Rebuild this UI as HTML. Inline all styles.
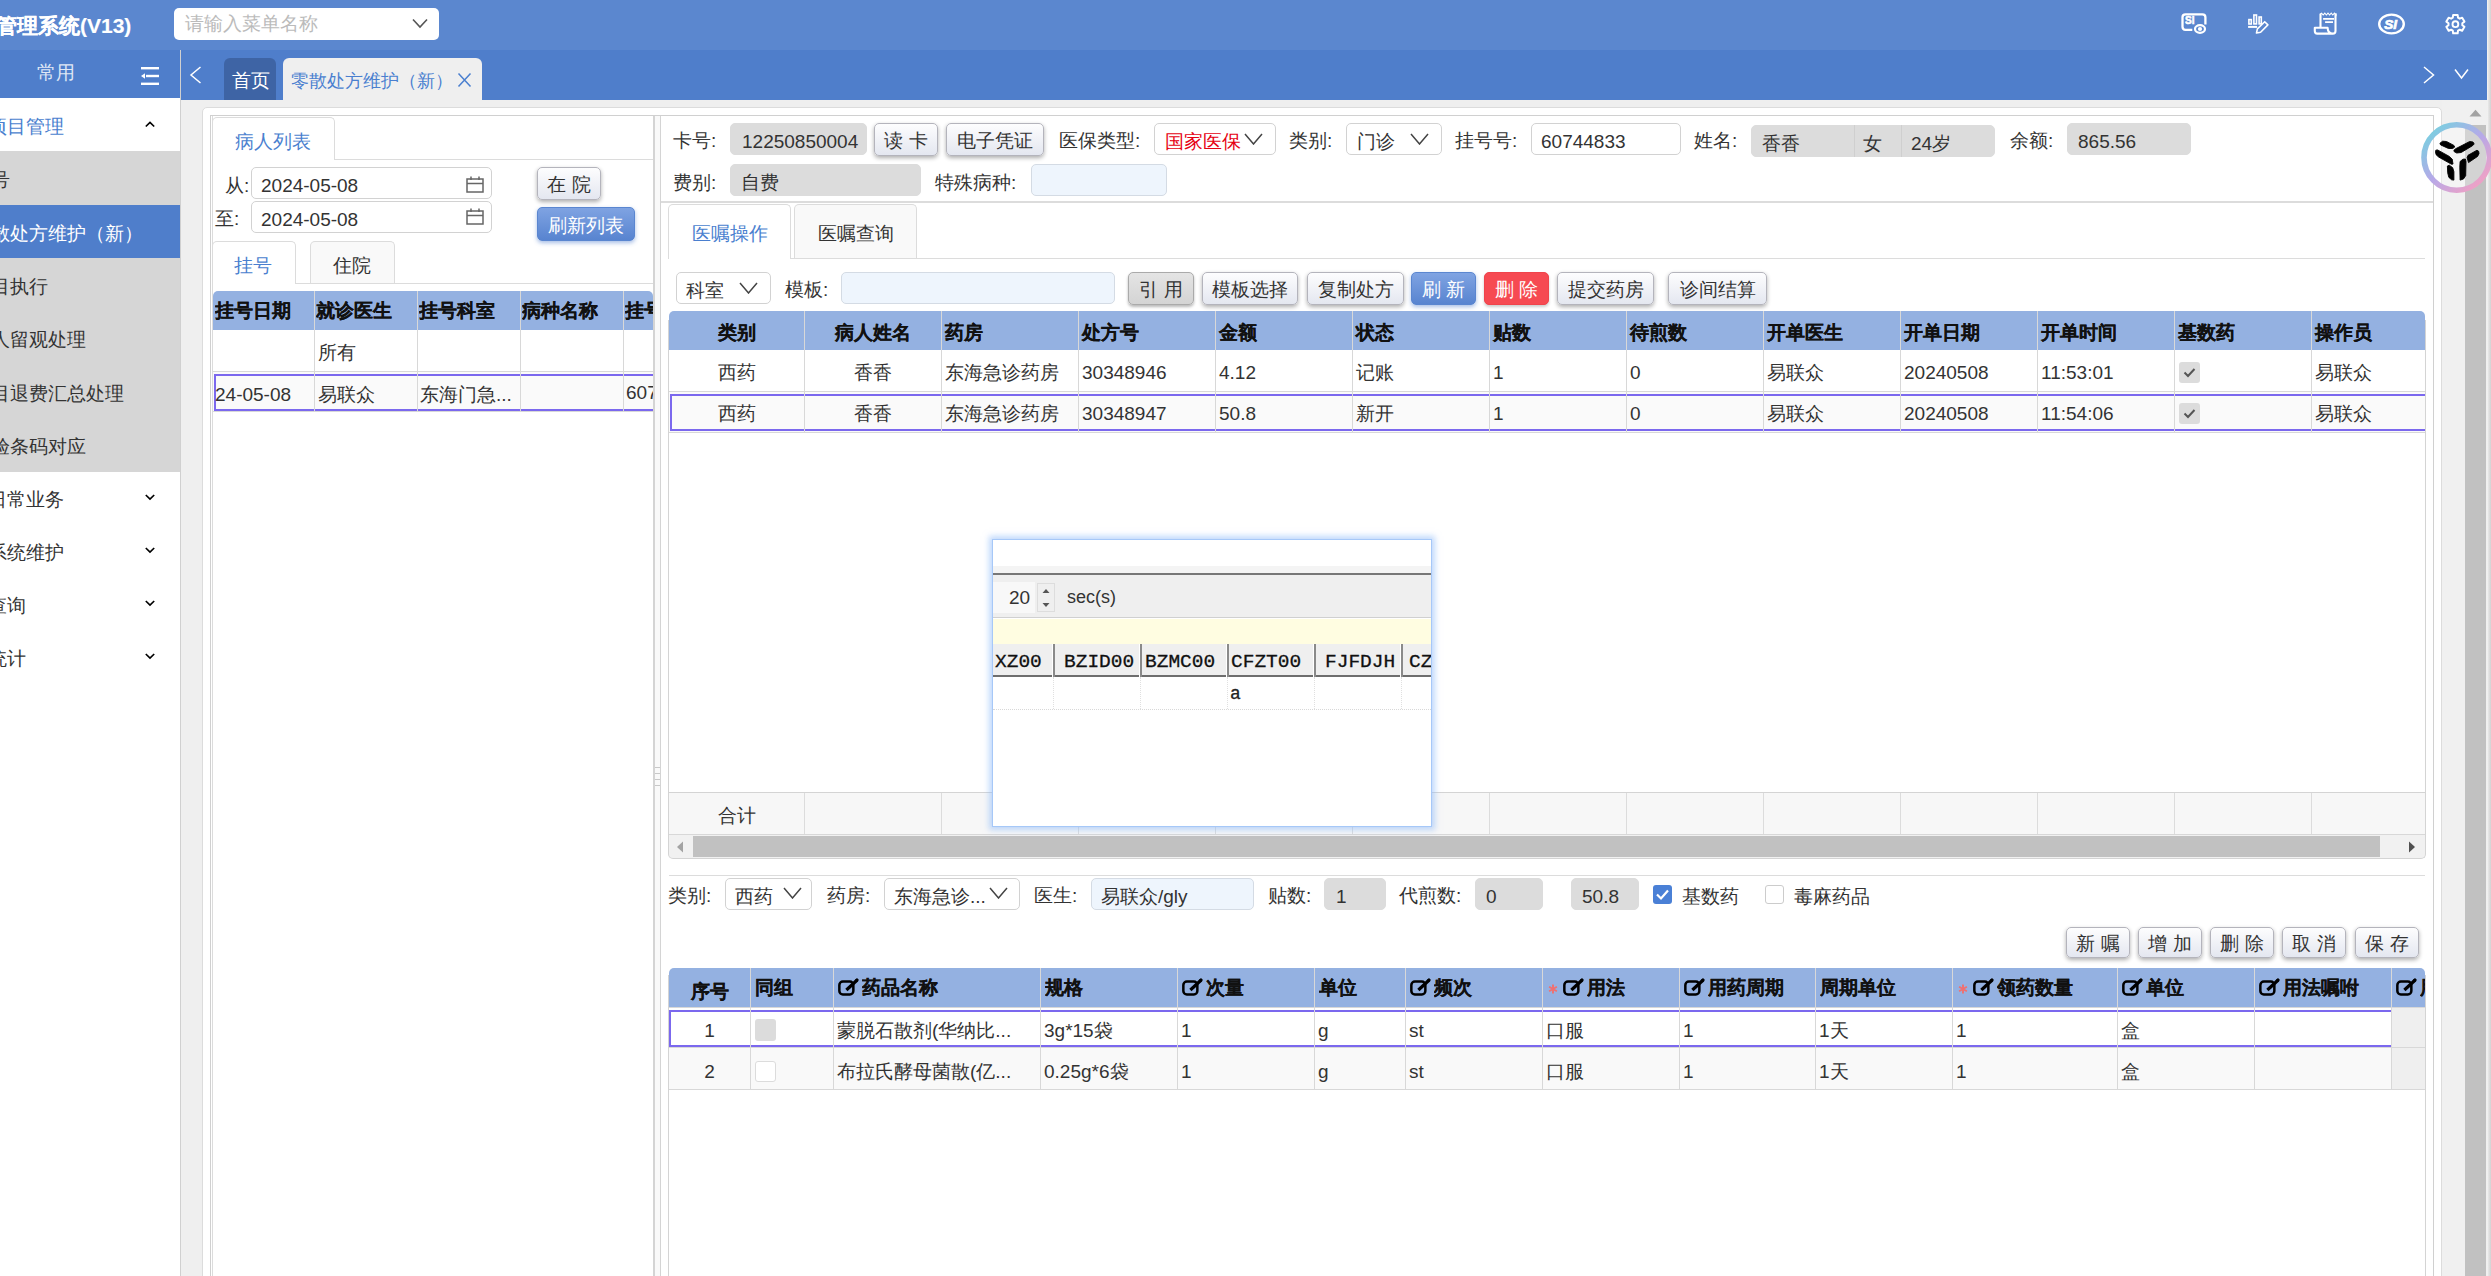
<!DOCTYPE html>
<html><head><meta charset="utf-8">
<style>
*{box-sizing:border-box;margin:0;padding:0}
html,body{width:2491px;height:1276px;overflow:hidden;background:#efefef;font-family:"Liberation Sans",sans-serif;font-size:19px;color:#333}
.a{position:absolute}
.nw{white-space:nowrap}
.b{font-weight:bold}
[style*="font-weight:bold"]{-webkit-text-stroke:0.15px currentColor}
.hdr{left:0;top:0;width:2487px;height:50px;background:#5b87cf}
.tabbar{left:0;top:50px;width:2487px;height:50px;background:#4f7ecb}
.rborder{left:2487px;top:0;width:4px;height:1276px;background:linear-gradient(90deg,#f6f6f6,#e4e4e4 40%,#d2d2d2)}
.side{left:0;top:98px;width:180px;height:1178px;background:#fff}
.si{left:0;width:180px;height:54px;background:#d6d6d6;line-height:53px;white-space:nowrap;overflow:hidden}
.si span{position:absolute;left:-28px;top:2px}
.sg{left:0;width:180px;height:53px;line-height:53px;white-space:nowrap;overflow:hidden}
.sg span{position:absolute;left:-12px;top:2px}
.chev{position:absolute;left:145px;width:10px;height:10px}
</style></head><body>
<!-- header -->
<div class="a hdr"></div>
<div class="a tabbar"></div>
<div class="a rborder"></div>
<div class="a nw" style="left:-4px;top:8px;height:34px;line-height:35px;font-size:21px;font-weight:bold;color:#fff">管理系统(V13)</div>
<div class="a" style="left:174px;top:8px;width:265px;height:32px;background:#fff;border-radius:5px"></div>
<div class="a nw" style="left:185px;top:8px;height:32px;line-height:32px;color:#bbb">请输入菜单名称</div>
<svg class="a" style="left:412px;top:18px" width="16" height="11" viewBox="0 0 16 11"><path d="M1 1.5 L8 9 L15 1.5" fill="none" stroke="#555" stroke-width="1.6"/></svg>

<!-- sidebar -->
<div class="a side"></div>
<div class="a" style="left:0;top:50px;width:180px;height:48px;background:#4f7ecb"></div>
<div class="a nw" style="left:37px;top:50px;height:48px;line-height:46px;color:#dfe7f5">常用</div>
<svg class="a" style="left:140px;top:66px" width="20" height="20" viewBox="0 0 20 20"><g fill="#fff"><rect x="1" y="1" width="18" height="2.4"/><rect x="6" y="8.8" width="13" height="2.4"/><rect x="1" y="16.6" width="18" height="2.4"/><path d="M1 10 L5 7.3 L5 12.7 Z"/></g></svg>
<div class="a" style="left:180px;top:50px;width:1px;height:1226px;background:#d0d0d0"></div>

<div class="a sg" style="top:98px;color:#4a7fcf"><span>项目管理</span><svg class="chev" style="top:22px" viewBox="0 0 10 10"><path d="M0.8 6.5 L5 2.5 L9.2 6.5" fill="none" stroke="#000" stroke-width="1.7"/></svg></div>
<div class="a si" style="top:151px"><span>挂号</span></div>
<div class="a si" style="top:205px;height:53px;background:#4f7ecb;color:#fff"><span>零散处方维护（新）</span></div>
<div class="a si" style="top:258px"><span>项目执行</span></div>
<div class="a si" style="top:311px"><span>病人留观处理</span></div>
<div class="a si" style="top:365px"><span>项目退费汇总处理</span></div>
<div class="a si" style="top:418px;height:53.5px"><span>检验条码对应</span></div>
<div class="a sg" style="top:471px"><span>日常业务</span><svg class="chev" style="top:21px" viewBox="0 0 10 10"><path d="M0.8 3 L5 7 L9.2 3" fill="none" stroke="#000" stroke-width="1.7"/></svg></div>
<div class="a sg" style="top:524px"><span>系统维护</span><svg class="chev" style="top:21px" viewBox="0 0 10 10"><path d="M0.8 3 L5 7 L9.2 3" fill="none" stroke="#000" stroke-width="1.7"/></svg></div>
<div class="a sg" style="top:577px"><span>查询</span><svg class="chev" style="top:21px" viewBox="0 0 10 10"><path d="M0.8 3 L5 7 L9.2 3" fill="none" stroke="#000" stroke-width="1.7"/></svg></div>
<div class="a sg" style="top:630px"><span>统计</span><svg class="chev" style="top:21px" viewBox="0 0 10 10"><path d="M0.8 3 L5 7 L9.2 3" fill="none" stroke="#000" stroke-width="1.7"/></svg></div>

<!-- tabs -->
<svg class="a" style="left:189px;top:66px" width="13" height="18" viewBox="0 0 13 18"><path d="M11.5 1 L2 9 L11.5 17" fill="none" stroke="#fff" stroke-width="1.5"/></svg>
<div class="a" style="left:224px;top:58px;width:52px;height:42px;background:#3e64a5;border-radius:6px 6px 0 0"></div>
<div class="a nw" style="left:232px;top:62px;height:38px;line-height:38px;color:#fff">首页</div>
<div class="a" style="left:283px;top:58px;width:199px;height:42px;background:#efefef;border-radius:6px 6px 0 0"></div>
<div class="a nw" style="left:291px;top:62px;height:38px;line-height:38px;color:#4a7fcf;font-size:18px">零散处方维护（新）</div>
<svg class="a" style="left:457px;top:72px" width="15" height="16" viewBox="0 0 15 16"><path d="M1.5 1.5 L13.5 14.5 M13.5 1.5 L1.5 14.5" fill="none" stroke="#4a7fcf" stroke-width="1.5"/></svg>
<svg class="a" style="left:2422px;top:66px" width="14" height="18" viewBox="0 0 14 18"><path d="M2 1 L11.5 9 L2 17" fill="none" stroke="#fff" stroke-width="1.5"/></svg>
<svg class="a" style="left:2454px;top:68px" width="15" height="12" viewBox="0 0 15 12"><path d="M1 1.5 L7.5 10 L14 1.5" fill="none" stroke="#fff" stroke-width="1.5"/></svg>


<div class="a" style="left:202px;top:107px;width:2240px;height:1200px;background:#fff;border:1px solid #dcdcdc;border-radius:5px"></div>
<div class="a" style="left:210px;top:115px;width:2224px;height:1200px;border:1px solid #d0d0d0"></div>
<div class="a" style="left:212px;top:116px;width:1px;height:1160px;background:#dcdcdc"></div>
<div class="a" style="left:653px;top:116px;width:2px;height:1160px;background:#d4d4d4"></div>
<div class="a" style="left:655px;top:116px;width:5px;height:1160px;background:#f9f9f9"></div>
<div class="a" style="left:660px;top:116px;width:1px;height:1160px;background:#d4d4d4"></div>
<div class="a" style="left:655px;top:767px;width:5px;height:1px;background:#c8c8c8"></div>
<div class="a" style="left:655px;top:773px;width:5px;height:1px;background:#c8c8c8"></div>
<div class="a" style="left:655px;top:779px;width:5px;height:1px;background:#c8c8c8"></div>
<div class="a" style="left:655px;top:785px;width:5px;height:1px;background:#c8c8c8"></div>
<div class="a" style="left:212px;top:117px;width:123px;height:43px;background:#fff;border:1px solid #dcdcdc;border-bottom:none;border-radius:5px 5px 0 0"></div>
<div class="a" style="left:335px;top:159px;width:318px;height:1px;background:#dcdcdc"></div>
<div class="a nw" style="left:235px;top:122px;height:40px;line-height:40px;color:#4a7fcf">病人列表</div>
<div class="a nw" style="left:225px;top:170px;height:32px;line-height:32px;color:#333">从:</div>
<div class="a nw" style="left:215px;top:203px;height:32px;line-height:32px;color:#333">至:</div>
<div class="a" style="left:251px;top:167px;width:241px;height:32px;border-radius:5px;background:#fff;border:1px solid #d2d2d2;"></div>
<div class="a" style="left:251px;top:201px;width:241px;height:32px;border-radius:5px;background:#fff;border:1px solid #d2d2d2;"></div>
<div class="a nw" style="left:261px;top:169px;height:33px;line-height:33px;color:#333">2024-05-08</div>
<div class="a nw" style="left:261px;top:203px;height:33px;line-height:33px;color:#333">2024-05-08</div>
<svg class="a" style="left:466px;top:176px" width="18" height="17" viewBox="0 0 18 17"><g fill="none" stroke="#666" stroke-width="1.5"><rect x="1" y="3" width="16" height="13"/><path d="M1 7.5 H17 M5 0.5 V4 M13 0.5 V4"/></g></svg>
<svg class="a" style="left:466px;top:208px" width="18" height="17" viewBox="0 0 18 17"><g fill="none" stroke="#666" stroke-width="1.5"><rect x="1" y="3" width="16" height="13"/><path d="M1 7.5 H17 M5 0.5 V4 M13 0.5 V4"/></g></svg>
<div class="a nw" style="left:537px;top:167px;width:64px;height:33px;line-height:34px;text-align:center;border-radius:5px;background:linear-gradient(#fdfdfe,#e4e7f0);border:1px solid #b4b4bc;box-shadow:0 2px 4px rgba(0,0,0,.32);color:#333;">在&nbsp;院</div>
<div class="a nw" style="left:537px;top:207px;width:98px;height:34px;line-height:35px;text-align:center;border-radius:5px;background:linear-gradient(#7fa3e2,#5884d0);border:1px solid #5a86d0;box-shadow:0 2px 4px rgba(60,110,200,.45);color:#fff;">刷新列表</div>
<div class="a" style="left:212px;top:241px;width:84px;height:43px;background:#fff;border:1px solid #dcdcdc;border-bottom:none;border-radius:5px 5px 0 0"></div>
<div class="a" style="left:310px;top:241px;width:85px;height:42px;background:#f9f9f9;border:1px solid #dcdcdc;border-bottom:none;border-radius:5px 5px 0 0"></div>
<div class="a" style="left:296px;top:283px;width:357px;height:1px;background:#dcdcdc"></div>
<div class="a" style="left:310px;top:283px;width:85px;height:1px;background:#dcdcdc"></div>
<div class="a nw" style="left:234px;top:247px;height:38px;line-height:38px;color:#4a7fcf">挂号</div>
<div class="a nw" style="left:333px;top:247px;height:38px;line-height:38px;color:#333">住院</div>
<div class="a" style="left:213px;top:291px;width:440px;height:39px;background:#94b1e1;border-radius:5px 5px 0 0"></div>
<div class="a" style="left:314px;top:291px;width:1px;height:121px;background:#d8d8d8"></div>
<div class="a" style="left:417px;top:291px;width:1px;height:121px;background:#d8d8d8"></div>
<div class="a" style="left:520px;top:291px;width:1px;height:121px;background:#d8d8d8"></div>
<div class="a" style="left:623px;top:291px;width:1px;height:121px;background:#d8d8d8"></div>
<div class="a nw" style="left:215px;top:291px;width:99px;height:39px;line-height:40px;overflow:hidden;font-weight:bold;color:#111">挂号日期</div>
<div class="a nw" style="left:316px;top:291px;width:101px;height:39px;line-height:40px;overflow:hidden;font-weight:bold;color:#111">就诊医生</div>
<div class="a nw" style="left:419px;top:291px;width:101px;height:39px;line-height:40px;overflow:hidden;font-weight:bold;color:#111">挂号科室</div>
<div class="a nw" style="left:522px;top:291px;width:101px;height:39px;line-height:40px;overflow:hidden;font-weight:bold;color:#111">病种名称</div>
<div class="a nw" style="left:625px;top:291px;width:28px;height:39px;line-height:40px;overflow:hidden;font-weight:bold;color:#111">挂号号</div>
<div class="a" style="left:213px;top:371px;width:440px;height:1px;background:#d8d8d8"></div>
<div class="a" style="left:213px;top:372px;width:440px;height:40px;background:#fafafa"></div>
<div class="a" style="left:214px;top:374px;width:439px;height:37px;border:2px solid #7b68ee;border-right:none"></div>
<div class="a" style="left:314px;top:372px;width:1px;height:40px;background:#d8d8d8"></div>
<div class="a" style="left:417px;top:372px;width:1px;height:40px;background:#d8d8d8"></div>
<div class="a" style="left:520px;top:372px;width:1px;height:40px;background:#d8d8d8"></div>
<div class="a" style="left:623px;top:372px;width:1px;height:40px;background:#d8d8d8"></div>
<div class="a" style="left:213px;top:411px;width:440px;height:1px;background:#d8d8d8"></div>
<div class="a nw" style="left:318px;top:333px;height:40px;line-height:40px;color:#333">所有</div>
<div class="a nw" style="left:215px;top:375px;height:39px;line-height:39px;color:#333">24-05-08</div>
<div class="a nw" style="left:318px;top:375px;height:39px;line-height:39px;color:#333">易联众</div>
<div class="a nw" style="left:420px;top:375px;height:39px;line-height:39px;color:#333">东海门急...</div>
<div class="a nw" style="left:626px;top:373px;width:27px;height:39px;line-height:39px;overflow:hidden;color:#333">60744833</div>
<div class="a nw" style="left:673px;top:125px;height:32px;line-height:32px;color:#333">卡号:</div>
<div class="a" style="left:730px;top:123px;width:137px;height:32px;border-radius:5px;background:#dcdcdc;border:1px solid #dcdcdc;"></div>
<div class="a nw" style="left:742px;top:125px;height:33px;line-height:33px;color:#333">12250850004</div>
<div class="a nw" style="left:874px;top:123px;width:64px;height:33px;line-height:34px;text-align:center;border-radius:5px;background:linear-gradient(#fdfdfe,#e4e7f0);border:1px solid #b4b4bc;box-shadow:0 2px 4px rgba(0,0,0,.32);color:#333;">读&nbsp;卡</div>
<div class="a nw" style="left:946px;top:123px;width:98px;height:33px;line-height:34px;text-align:center;border-radius:5px;background:linear-gradient(#fdfdfe,#e4e7f0);border:1px solid #b4b4bc;box-shadow:0 2px 4px rgba(0,0,0,.32);color:#333;">电子凭证</div>
<div class="a nw" style="left:1059px;top:125px;height:32px;line-height:32px;color:#333">医保类型:</div>
<div class="a" style="left:1154px;top:123px;width:122px;height:32px;border-radius:5px;background:#fff;border:1px solid #d2d2d2;"></div>
<div class="a nw" style="left:1165px;top:125px;height:33px;line-height:33px;color:#e60012">国家医保</div>
<svg class="a" style="left:1244px;top:133px" width="19" height="12" viewBox="0 0 19 12"><path d="M1 1 L9.5 11 L18 1" fill="none" stroke="#444" stroke-width="1.5"/></svg>
<div class="a nw" style="left:1289px;top:125px;height:32px;line-height:32px;color:#333">类别:</div>
<div class="a" style="left:1346px;top:123px;width:96px;height:32px;border-radius:5px;background:#fff;border:1px solid #d2d2d2;"></div>
<div class="a nw" style="left:1357px;top:125px;height:33px;line-height:33px;color:#333">门诊</div>
<svg class="a" style="left:1410px;top:133px" width="19" height="12" viewBox="0 0 19 12"><path d="M1 1 L9.5 11 L18 1" fill="none" stroke="#444" stroke-width="1.5"/></svg>
<div class="a nw" style="left:1455px;top:125px;height:32px;line-height:32px;color:#333">挂号号:</div>
<div class="a" style="left:1531px;top:123px;width:150px;height:32px;border-radius:5px;background:#fff;border:1px solid #d2d2d2;"></div>
<div class="a nw" style="left:1541px;top:125px;height:33px;line-height:33px;color:#333">60744833</div>
<div class="a nw" style="left:1694px;top:125px;height:32px;line-height:32px;color:#333">姓名:</div>
<div class="a" style="left:1751px;top:125px;width:244px;height:32px;border-radius:5px;background:#dcdcdc;border:1px solid #dcdcdc;"></div>
<div class="a" style="left:1854px;top:125px;width:1px;height:32px;background:#cfcfcf"></div>
<div class="a" style="left:1901px;top:125px;width:1px;height:32px;background:#cfcfcf"></div>
<div class="a nw" style="left:1762px;top:127px;height:33px;line-height:33px;color:#333">香香</div>
<div class="a nw" style="left:1863px;top:127px;height:33px;line-height:33px;color:#333">女</div>
<div class="a nw" style="left:1911px;top:127px;height:33px;line-height:33px;color:#333">24岁</div>
<div class="a nw" style="left:2010px;top:125px;height:32px;line-height:32px;color:#333">余额:</div>
<div class="a" style="left:2067px;top:123px;width:124px;height:32px;border-radius:5px;background:#dcdcdc;border:1px solid #dcdcdc;"></div>
<div class="a nw" style="left:2078px;top:125px;height:33px;line-height:33px;color:#333">865.56</div>
<div class="a nw" style="left:673px;top:166px;height:33px;line-height:33px;color:#333">费别:</div>
<div class="a" style="left:730px;top:164px;width:191px;height:32px;border-radius:5px;background:#dcdcdc;border:1px solid #dcdcdc;"></div>
<div class="a nw" style="left:741px;top:166px;height:34px;line-height:34px;color:#333">自费</div>
<div class="a nw" style="left:935px;top:166px;height:33px;line-height:33px;color:#333">特殊病种:</div>
<div class="a" style="left:1031px;top:164px;width:136px;height:32px;border-radius:5px;background:#eef5fd;border:1px solid #d4dbe4;"></div>
<div class="a" style="left:661px;top:201px;width:1772px;height:2px;background:#dcdcdc"></div>
<div class="a" style="left:668px;top:204px;width:123px;height:55px;background:#fff;border:1px solid #dcdcdc;border-bottom:none;border-radius:5px 5px 0 0"></div>
<div class="a" style="left:794px;top:204px;width:123px;height:55px;background:#f9f9f9;border:1px solid #dcdcdc;border-bottom:none;border-radius:5px 5px 0 0"></div>
<div class="a" style="left:791px;top:258px;width:1634px;height:1px;background:#dcdcdc"></div>
<div class="a nw" style="left:692px;top:214px;height:40px;line-height:40px;color:#4a7fcf">医嘱操作</div>
<div class="a nw" style="left:818px;top:214px;height:40px;line-height:40px;color:#333">医嘱查询</div>
<div class="a" style="left:676px;top:272px;width:95px;height:32px;border-radius:5px;background:#fff;border:1px solid #d2d2d2;"></div>
<div class="a nw" style="left:686px;top:274px;height:33px;line-height:33px;color:#333">科室</div>
<svg class="a" style="left:739px;top:282px" width="19" height="12" viewBox="0 0 19 12"><path d="M1 1 L9.5 11 L18 1" fill="none" stroke="#444" stroke-width="1.5"/></svg>
<div class="a nw" style="left:785px;top:274px;height:32px;line-height:32px;color:#333">模板:</div>
<div class="a" style="left:841px;top:272px;width:274px;height:32px;border-radius:5px;background:#eef5fd;border:1px solid #d4dbe4;"></div>
<div class="a nw" style="left:1128px;top:272px;width:66px;height:33px;line-height:34px;text-align:center;border-radius:5px;background:linear-gradient(#e4e4e4,#d4d4d4);border:1px solid #aaa;box-shadow:0 2px 3px rgba(0,0,0,.28);color:#333;">引&nbsp;用</div>
<div class="a nw" style="left:1202px;top:272px;width:96px;height:33px;line-height:34px;text-align:center;border-radius:5px;background:linear-gradient(#fdfdfe,#e4e7f0);border:1px solid #b4b4bc;box-shadow:0 2px 4px rgba(0,0,0,.32);color:#333;">模板选择</div>
<div class="a nw" style="left:1307px;top:272px;width:97px;height:33px;line-height:34px;text-align:center;border-radius:5px;background:linear-gradient(#fdfdfe,#e4e7f0);border:1px solid #b4b4bc;box-shadow:0 2px 4px rgba(0,0,0,.32);color:#333;">复制处方</div>
<div class="a nw" style="left:1411px;top:272px;width:65px;height:33px;line-height:34px;text-align:center;border-radius:5px;background:linear-gradient(#7fa3e2,#5884d0);border:1px solid #5a86d0;box-shadow:0 2px 4px rgba(60,110,200,.45);color:#fff;">刷&nbsp;新</div>
<div class="a nw" style="left:1484px;top:272px;width:65px;height:33px;line-height:34px;text-align:center;border-radius:5px;background:#f64a52;border:1px solid #f0444c;box-shadow:0 2px 3px rgba(0,0,0,.2);color:#fff;">删&nbsp;除</div>
<div class="a nw" style="left:1557px;top:272px;width:97px;height:33px;line-height:34px;text-align:center;border-radius:5px;background:linear-gradient(#fdfdfe,#e4e7f0);border:1px solid #b4b4bc;box-shadow:0 2px 4px rgba(0,0,0,.32);color:#333;">提交药房</div>
<div class="a nw" style="left:1668px;top:272px;width:99px;height:33px;line-height:34px;text-align:center;border-radius:5px;background:linear-gradient(#fdfdfe,#e4e7f0);border:1px solid #b4b4bc;box-shadow:0 2px 4px rgba(0,0,0,.32);color:#333;">诊间结算</div>
<div class="a" style="left:669px;top:311px;width:1756px;height:39px;background:#94b1e1;border-radius:5px 5px 0 0"></div>
<div class="a" style="left:668px;top:320px;width:1px;height:530px;background:#d4d4d4"></div>
<div class="a" style="left:2425px;top:320px;width:1px;height:530px;background:#d4d4d4"></div>
<div class="a" style="left:804px;top:311px;width:1px;height:121px;background:#d8d8d8"></div>
<div class="a" style="left:941px;top:311px;width:1px;height:121px;background:#d8d8d8"></div>
<div class="a" style="left:1078px;top:311px;width:1px;height:121px;background:#d8d8d8"></div>
<div class="a" style="left:1215px;top:311px;width:1px;height:121px;background:#d8d8d8"></div>
<div class="a" style="left:1352px;top:311px;width:1px;height:121px;background:#d8d8d8"></div>
<div class="a" style="left:1489px;top:311px;width:1px;height:121px;background:#d8d8d8"></div>
<div class="a" style="left:1626px;top:311px;width:1px;height:121px;background:#d8d8d8"></div>
<div class="a" style="left:1763px;top:311px;width:1px;height:121px;background:#d8d8d8"></div>
<div class="a" style="left:1900px;top:311px;width:1px;height:121px;background:#d8d8d8"></div>
<div class="a" style="left:2037px;top:311px;width:1px;height:121px;background:#d8d8d8"></div>
<div class="a" style="left:2174px;top:311px;width:1px;height:121px;background:#d8d8d8"></div>
<div class="a" style="left:2311px;top:311px;width:1px;height:121px;background:#d8d8d8"></div>
<div class="a nw" style="left:669px;top:313px;width:135px;height:40px;line-height:40px;text-align:center;font-weight:bold;color:#111">类别</div>
<div class="a nw" style="left:804px;top:313px;width:137px;height:40px;line-height:40px;text-align:center;font-weight:bold;color:#111">病人姓名</div>
<div class="a nw" style="left:945px;top:313px;height:40px;line-height:40px;font-weight:bold;color:#111">药房</div>
<div class="a nw" style="left:1082px;top:313px;height:40px;line-height:40px;font-weight:bold;color:#111">处方号</div>
<div class="a nw" style="left:1219px;top:313px;height:40px;line-height:40px;font-weight:bold;color:#111">金额</div>
<div class="a nw" style="left:1356px;top:313px;height:40px;line-height:40px;font-weight:bold;color:#111">状态</div>
<div class="a nw" style="left:1493px;top:313px;height:40px;line-height:40px;font-weight:bold;color:#111">贴数</div>
<div class="a nw" style="left:1630px;top:313px;height:40px;line-height:40px;font-weight:bold;color:#111">待煎数</div>
<div class="a nw" style="left:1767px;top:313px;height:40px;line-height:40px;font-weight:bold;color:#111">开单医生</div>
<div class="a nw" style="left:1904px;top:313px;height:40px;line-height:40px;font-weight:bold;color:#111">开单日期</div>
<div class="a nw" style="left:2041px;top:313px;height:40px;line-height:40px;font-weight:bold;color:#111">开单时间</div>
<div class="a nw" style="left:2178px;top:313px;height:40px;line-height:40px;font-weight:bold;color:#111">基数药</div>
<div class="a nw" style="left:2315px;top:313px;height:40px;line-height:40px;font-weight:bold;color:#111">操作员</div>
<div class="a" style="left:669px;top:391px;width:1756px;height:1px;background:#d8d8d8"></div>
<div class="a" style="left:669px;top:392px;width:1756px;height:40px;background:#fafafa"></div>
<div class="a" style="left:670px;top:394px;width:1755px;height:37px;border:2px solid #7b68ee;border-right:none"></div>
<div class="a" style="left:804px;top:392px;width:1px;height:40px;background:#d8d8d8"></div>
<div class="a" style="left:941px;top:392px;width:1px;height:40px;background:#d8d8d8"></div>
<div class="a" style="left:1078px;top:392px;width:1px;height:40px;background:#d8d8d8"></div>
<div class="a" style="left:1215px;top:392px;width:1px;height:40px;background:#d8d8d8"></div>
<div class="a" style="left:1352px;top:392px;width:1px;height:40px;background:#d8d8d8"></div>
<div class="a" style="left:1489px;top:392px;width:1px;height:40px;background:#d8d8d8"></div>
<div class="a" style="left:1626px;top:392px;width:1px;height:40px;background:#d8d8d8"></div>
<div class="a" style="left:1763px;top:392px;width:1px;height:40px;background:#d8d8d8"></div>
<div class="a" style="left:1900px;top:392px;width:1px;height:40px;background:#d8d8d8"></div>
<div class="a" style="left:2037px;top:392px;width:1px;height:40px;background:#d8d8d8"></div>
<div class="a" style="left:2174px;top:392px;width:1px;height:40px;background:#d8d8d8"></div>
<div class="a" style="left:2311px;top:392px;width:1px;height:40px;background:#d8d8d8"></div>
<div class="a" style="left:669px;top:432px;width:1756px;height:1px;background:#d8d8d8"></div>
<div class="a nw" style="left:669px;top:353px;width:135px;height:40px;line-height:40px;text-align:center;color:#333">西药</div>
<div class="a nw" style="left:804px;top:353px;width:137px;height:40px;line-height:40px;text-align:center;color:#333">香香</div>
<div class="a nw" style="left:945px;top:353px;height:40px;line-height:40px;color:#333">东海急诊药房</div>
<div class="a nw" style="left:1082px;top:353px;height:40px;line-height:40px;color:#333">30348946</div>
<div class="a nw" style="left:1219px;top:353px;height:40px;line-height:40px;color:#333">4.12</div>
<div class="a nw" style="left:1356px;top:353px;height:40px;line-height:40px;color:#333">记账</div>
<div class="a nw" style="left:1493px;top:353px;height:40px;line-height:40px;color:#333">1</div>
<div class="a nw" style="left:1630px;top:353px;height:40px;line-height:40px;color:#333">0</div>
<div class="a nw" style="left:1767px;top:353px;height:40px;line-height:40px;color:#333">易联众</div>
<div class="a nw" style="left:1904px;top:353px;height:40px;line-height:40px;color:#333">20240508</div>
<div class="a nw" style="left:2041px;top:353px;height:40px;line-height:40px;color:#333">11:53:01</div>
<div class="a" style="left:2179px;top:362px;width:21px;height:21px;background:#dcdcdc;border-radius:3px"></div>
<svg class="a" style="left:2183px;top:367px" width="13" height="11" viewBox="0 0 13 11"><path d="M1.5 5.5 L5 9 L11.5 2" fill="none" stroke="#555" stroke-width="2"/></svg>
<div class="a nw" style="left:2315px;top:353px;height:40px;line-height:40px;color:#333">易联众</div>
<div class="a nw" style="left:669px;top:394px;width:135px;height:40px;line-height:40px;text-align:center;color:#333">西药</div>
<div class="a nw" style="left:804px;top:394px;width:137px;height:40px;line-height:40px;text-align:center;color:#333">香香</div>
<div class="a nw" style="left:945px;top:394px;height:40px;line-height:40px;color:#333">东海急诊药房</div>
<div class="a nw" style="left:1082px;top:394px;height:40px;line-height:40px;color:#333">30348947</div>
<div class="a nw" style="left:1219px;top:394px;height:40px;line-height:40px;color:#333">50.8</div>
<div class="a nw" style="left:1356px;top:394px;height:40px;line-height:40px;color:#333">新开</div>
<div class="a nw" style="left:1493px;top:394px;height:40px;line-height:40px;color:#333">1</div>
<div class="a nw" style="left:1630px;top:394px;height:40px;line-height:40px;color:#333">0</div>
<div class="a nw" style="left:1767px;top:394px;height:40px;line-height:40px;color:#333">易联众</div>
<div class="a nw" style="left:1904px;top:394px;height:40px;line-height:40px;color:#333">20240508</div>
<div class="a nw" style="left:2041px;top:394px;height:40px;line-height:40px;color:#333">11:54:06</div>
<div class="a" style="left:2179px;top:403px;width:21px;height:21px;background:#dcdcdc;border-radius:3px"></div>
<svg class="a" style="left:2183px;top:408px" width="13" height="11" viewBox="0 0 13 11"><path d="M1.5 5.5 L5 9 L11.5 2" fill="none" stroke="#555" stroke-width="2"/></svg>
<div class="a nw" style="left:2315px;top:394px;height:40px;line-height:40px;color:#333">易联众</div>
<div class="a" style="left:669px;top:792px;width:1756px;height:1px;background:#d4d4d4"></div>
<div class="a" style="left:669px;top:793px;width:1756px;height:42px;background:#f7f7f7"></div>
<div class="a" style="left:804px;top:793px;width:1px;height:42px;background:#dcdcdc"></div>
<div class="a" style="left:941px;top:793px;width:1px;height:42px;background:#dcdcdc"></div>
<div class="a" style="left:1078px;top:793px;width:1px;height:42px;background:#dcdcdc"></div>
<div class="a" style="left:1215px;top:793px;width:1px;height:42px;background:#dcdcdc"></div>
<div class="a" style="left:1352px;top:793px;width:1px;height:42px;background:#dcdcdc"></div>
<div class="a" style="left:1489px;top:793px;width:1px;height:42px;background:#dcdcdc"></div>
<div class="a" style="left:1626px;top:793px;width:1px;height:42px;background:#dcdcdc"></div>
<div class="a" style="left:1763px;top:793px;width:1px;height:42px;background:#dcdcdc"></div>
<div class="a" style="left:1900px;top:793px;width:1px;height:42px;background:#dcdcdc"></div>
<div class="a" style="left:2037px;top:793px;width:1px;height:42px;background:#dcdcdc"></div>
<div class="a" style="left:2174px;top:793px;width:1px;height:42px;background:#dcdcdc"></div>
<div class="a" style="left:2311px;top:793px;width:1px;height:42px;background:#dcdcdc"></div>
<div class="a nw" style="left:669px;top:795px;width:135px;height:42px;line-height:42px;text-align:center;color:#333">合计</div>
<div class="a" style="left:669px;top:834px;width:1756px;height:1px;background:#d8d8d8"></div>
<div class="a" style="left:668px;top:835px;width:1758px;height:24px;background:#f1f1f1;border:1px solid #d4d4d4;border-top:none;border-radius:0 0 5px 5px"></div>
<div class="a" style="left:693px;top:836px;width:1687px;height:21px;background:#c1c1c1"></div>
<svg class="a" style="left:675px;top:840px" width="10" height="14" viewBox="0 0 10 14"><path d="M8 1.5 L2 7 L8 12.5 Z" fill="#a3a3a3"/></svg>
<svg class="a" style="left:2407px;top:840px" width="10" height="14" viewBox="0 0 10 14"><path d="M2 1.5 L8 7 L2 12.5 Z" fill="#505050"/></svg>
<div class="a" style="left:669px;top:875px;width:1756px;height:1px;background:#dcdcdc"></div>
<div class="a nw" style="left:668px;top:880px;height:32px;line-height:32px;color:#333">类别:</div>
<div class="a" style="left:725px;top:878px;width:87px;height:32px;border-radius:5px;background:#fff;border:1px solid #d2d2d2;"></div>
<div class="a nw" style="left:735px;top:880px;height:33px;line-height:33px;color:#333">西药</div>
<svg class="a" style="left:783px;top:887px" width="19" height="12" viewBox="0 0 19 12"><path d="M1 1 L9.5 11 L18 1" fill="none" stroke="#444" stroke-width="1.5"/></svg>
<div class="a nw" style="left:827px;top:880px;height:32px;line-height:32px;color:#333">药房:</div>
<div class="a" style="left:884px;top:878px;width:136px;height:32px;border-radius:5px;background:#fff;border:1px solid #d2d2d2;"></div>
<div class="a nw" style="left:894px;top:880px;height:33px;line-height:33px;color:#333">东海急诊...</div>
<svg class="a" style="left:989px;top:887px" width="19" height="12" viewBox="0 0 19 12"><path d="M1 1 L9.5 11 L18 1" fill="none" stroke="#444" stroke-width="1.5"/></svg>
<div class="a nw" style="left:1034px;top:880px;height:32px;line-height:32px;color:#333">医生:</div>
<div class="a" style="left:1091px;top:878px;width:163px;height:32px;border-radius:5px;background:#eef5fd;border:1px solid #d4dbe4;"></div>
<div class="a nw" style="left:1101px;top:880px;height:34px;line-height:34px;color:#333">易联众/gly</div>
<div class="a nw" style="left:1268px;top:880px;height:32px;line-height:32px;color:#333">贴数:</div>
<div class="a" style="left:1324px;top:878px;width:62px;height:32px;border-radius:5px;background:#dcdcdc;border:1px solid #dcdcdc;"></div>
<div class="a nw" style="left:1336px;top:880px;height:34px;line-height:34px;color:#333">1</div>
<div class="a nw" style="left:1399px;top:880px;height:32px;line-height:32px;color:#333">代煎数:</div>
<div class="a" style="left:1475px;top:878px;width:68px;height:32px;border-radius:5px;background:#dcdcdc;border:1px solid #dcdcdc;"></div>
<div class="a nw" style="left:1486px;top:880px;height:34px;line-height:34px;color:#333">0</div>
<div class="a" style="left:1571px;top:878px;width:68px;height:32px;border-radius:5px;background:#dcdcdc;border:1px solid #dcdcdc;"></div>
<div class="a nw" style="left:1582px;top:880px;height:34px;line-height:34px;color:#333">50.8</div>
<div class="a" style="left:1653px;top:885px;width:19px;height:19px;background:#4a80d6;border-radius:3px"></div>
<svg class="a" style="left:1655px;top:888px" width="15" height="13" viewBox="0 0 15 13"><path d="M2 6.5 L6 10.5 L13 2.5" fill="none" stroke="#fff" stroke-width="2.2"/></svg>
<div class="a nw" style="left:1682px;top:880px;height:33px;line-height:33px;color:#333">基数药</div>
<div class="a" style="left:1765px;top:885px;width:19px;height:19px;background:#fff;border:1px solid #ccc;border-radius:3px"></div>
<div class="a nw" style="left:1794px;top:880px;height:33px;line-height:33px;color:#333">毒麻药品</div>
<div class="a nw" style="left:2066px;top:927px;width:64px;height:31px;line-height:32px;text-align:center;border-radius:5px;background:linear-gradient(#fdfdfe,#e4e7f0);border:1px solid #b4b4bc;box-shadow:0 2px 4px rgba(0,0,0,.32);color:#333;">新&nbsp;嘱</div>
<div class="a nw" style="left:2138px;top:927px;width:64px;height:31px;line-height:32px;text-align:center;border-radius:5px;background:linear-gradient(#fdfdfe,#e4e7f0);border:1px solid #b4b4bc;box-shadow:0 2px 4px rgba(0,0,0,.32);color:#333;">增&nbsp;加</div>
<div class="a nw" style="left:2210px;top:927px;width:64px;height:31px;line-height:32px;text-align:center;border-radius:5px;background:linear-gradient(#fdfdfe,#e4e7f0);border:1px solid #b4b4bc;box-shadow:0 2px 4px rgba(0,0,0,.32);color:#333;">删&nbsp;除</div>
<div class="a nw" style="left:2282px;top:927px;width:64px;height:31px;line-height:32px;text-align:center;border-radius:5px;background:linear-gradient(#fdfdfe,#e4e7f0);border:1px solid #b4b4bc;box-shadow:0 2px 4px rgba(0,0,0,.32);color:#333;">取&nbsp;消</div>
<div class="a nw" style="left:2355px;top:927px;width:64px;height:31px;line-height:32px;text-align:center;border-radius:5px;background:linear-gradient(#fdfdfe,#e4e7f0);border:1px solid #b4b4bc;box-shadow:0 2px 4px rgba(0,0,0,.32);color:#333;">保&nbsp;存</div>
<div class="a" style="left:669px;top:968px;width:1756px;height:39px;background:#94b1e1;border-radius:5px 5px 0 0"></div>
<div class="a" style="left:668px;top:975px;width:1px;height:301px;background:#d4d4d4"></div>
<div class="a" style="left:2425px;top:975px;width:1px;height:301px;background:#d4d4d4"></div>
<div class="a" style="left:750px;top:968px;width:1px;height:122px;background:#d8d8d8"></div>
<div class="a" style="left:833px;top:968px;width:1px;height:122px;background:#d8d8d8"></div>
<div class="a" style="left:1040px;top:968px;width:1px;height:122px;background:#d8d8d8"></div>
<div class="a" style="left:1177px;top:968px;width:1px;height:122px;background:#d8d8d8"></div>
<div class="a" style="left:1314px;top:968px;width:1px;height:122px;background:#d8d8d8"></div>
<div class="a" style="left:1405px;top:968px;width:1px;height:122px;background:#d8d8d8"></div>
<div class="a" style="left:1542px;top:968px;width:1px;height:122px;background:#d8d8d8"></div>
<div class="a" style="left:1679px;top:968px;width:1px;height:122px;background:#d8d8d8"></div>
<div class="a" style="left:1815px;top:968px;width:1px;height:122px;background:#d8d8d8"></div>
<div class="a" style="left:1952px;top:968px;width:1px;height:122px;background:#d8d8d8"></div>
<div class="a" style="left:2117px;top:968px;width:1px;height:122px;background:#d8d8d8"></div>
<div class="a" style="left:2254px;top:968px;width:1px;height:122px;background:#d8d8d8"></div>
<div class="a" style="left:2391px;top:968px;width:1px;height:122px;background:#d8d8d8"></div>
<div class="a" style="left:669px;top:968px;width:1756px;height:39px;overflow:hidden">
</div>
<div class="a nw" style="left:669px;top:972px;width:81px;height:39px;line-height:39px;text-align:center;font-weight:bold;color:#111">序号</div>
<div class="a nw" style="left:755px;top:968px;width:78px;height:39px;line-height:39px;overflow:hidden;font-weight:bold;color:#111">同组</div>
<svg class="a" style="left:837.5px;top:976px" width="22" height="20" viewBox="0 0 22 20"><rect x="1.35" y="5.6" width="14" height="12.8" rx="3.5" fill="none" stroke="#000" stroke-width="2.5"/><path d="M8.4 14 L19.2 4" stroke="#000" stroke-width="3.2"/><path d="M16.6 4.2 L19 2 L21 4 L18.6 6.4 Z" fill="#000"/></svg>
<div class="a nw" style="left:861.5px;top:968px;width:178.5px;height:39px;line-height:39px;overflow:hidden;font-weight:bold;color:#111">药品名称</div>
<div class="a nw" style="left:1045px;top:968px;width:132px;height:39px;line-height:39px;overflow:hidden;font-weight:bold;color:#111">规格</div>
<svg class="a" style="left:1181.5px;top:976px" width="22" height="20" viewBox="0 0 22 20"><rect x="1.35" y="5.6" width="14" height="12.8" rx="3.5" fill="none" stroke="#000" stroke-width="2.5"/><path d="M8.4 14 L19.2 4" stroke="#000" stroke-width="3.2"/><path d="M16.6 4.2 L19 2 L21 4 L18.6 6.4 Z" fill="#000"/></svg>
<div class="a nw" style="left:1205.5px;top:968px;width:108.5px;height:39px;line-height:39px;overflow:hidden;font-weight:bold;color:#111">次量</div>
<div class="a nw" style="left:1319px;top:968px;width:86px;height:39px;line-height:39px;overflow:hidden;font-weight:bold;color:#111">单位</div>
<svg class="a" style="left:1409.5px;top:976px" width="22" height="20" viewBox="0 0 22 20"><rect x="1.35" y="5.6" width="14" height="12.8" rx="3.5" fill="none" stroke="#000" stroke-width="2.5"/><path d="M8.4 14 L19.2 4" stroke="#000" stroke-width="3.2"/><path d="M16.6 4.2 L19 2 L21 4 L18.6 6.4 Z" fill="#000"/></svg>
<div class="a nw" style="left:1433.5px;top:968px;width:108.5px;height:39px;line-height:39px;overflow:hidden;font-weight:bold;color:#111">频次</div>
<svg class="a" style="left:1548px;top:983.5px" width="10" height="10" viewBox="0 0 10 10"><g stroke="#f07070" stroke-width="1.9"><path d="M5 0.5 V9.5 M1.1 2.75 L8.9 7.25 M1.1 7.25 L8.9 2.75"/></g></svg>
<svg class="a" style="left:1563px;top:976px" width="22" height="20" viewBox="0 0 22 20"><rect x="1.35" y="5.6" width="14" height="12.8" rx="3.5" fill="none" stroke="#000" stroke-width="2.5"/><path d="M8.4 14 L19.2 4" stroke="#000" stroke-width="3.2"/><path d="M16.6 4.2 L19 2 L21 4 L18.6 6.4 Z" fill="#000"/></svg>
<div class="a nw" style="left:1587px;top:968px;width:92px;height:39px;line-height:39px;overflow:hidden;font-weight:bold;color:#111">用法</div>
<svg class="a" style="left:1683.5px;top:976px" width="22" height="20" viewBox="0 0 22 20"><rect x="1.35" y="5.6" width="14" height="12.8" rx="3.5" fill="none" stroke="#000" stroke-width="2.5"/><path d="M8.4 14 L19.2 4" stroke="#000" stroke-width="3.2"/><path d="M16.6 4.2 L19 2 L21 4 L18.6 6.4 Z" fill="#000"/></svg>
<div class="a nw" style="left:1707.5px;top:968px;width:107.5px;height:39px;line-height:39px;overflow:hidden;font-weight:bold;color:#111">用药周期</div>
<div class="a nw" style="left:1820px;top:968px;width:132px;height:39px;line-height:39px;overflow:hidden;font-weight:bold;color:#111">周期单位</div>
<svg class="a" style="left:1958px;top:983.5px" width="10" height="10" viewBox="0 0 10 10"><g stroke="#f07070" stroke-width="1.9"><path d="M5 0.5 V9.5 M1.1 2.75 L8.9 7.25 M1.1 7.25 L8.9 2.75"/></g></svg>
<svg class="a" style="left:1973px;top:976px" width="22" height="20" viewBox="0 0 22 20"><rect x="1.35" y="5.6" width="14" height="12.8" rx="3.5" fill="none" stroke="#000" stroke-width="2.5"/><path d="M8.4 14 L19.2 4" stroke="#000" stroke-width="3.2"/><path d="M16.6 4.2 L19 2 L21 4 L18.6 6.4 Z" fill="#000"/></svg>
<div class="a nw" style="left:1997px;top:968px;width:120px;height:39px;line-height:39px;overflow:hidden;font-weight:bold;color:#111">领药数量</div>
<svg class="a" style="left:2121.5px;top:976px" width="22" height="20" viewBox="0 0 22 20"><rect x="1.35" y="5.6" width="14" height="12.8" rx="3.5" fill="none" stroke="#000" stroke-width="2.5"/><path d="M8.4 14 L19.2 4" stroke="#000" stroke-width="3.2"/><path d="M16.6 4.2 L19 2 L21 4 L18.6 6.4 Z" fill="#000"/></svg>
<div class="a nw" style="left:2145.5px;top:968px;width:108.5px;height:39px;line-height:39px;overflow:hidden;font-weight:bold;color:#111">单位</div>
<svg class="a" style="left:2258.5px;top:976px" width="22" height="20" viewBox="0 0 22 20"><rect x="1.35" y="5.6" width="14" height="12.8" rx="3.5" fill="none" stroke="#000" stroke-width="2.5"/><path d="M8.4 14 L19.2 4" stroke="#000" stroke-width="3.2"/><path d="M16.6 4.2 L19 2 L21 4 L18.6 6.4 Z" fill="#000"/></svg>
<div class="a nw" style="left:2282.5px;top:968px;width:108.5px;height:39px;line-height:39px;overflow:hidden;font-weight:bold;color:#111">用法嘱咐</div>
<svg class="a" style="left:2395.5px;top:976px" width="22" height="20" viewBox="0 0 22 20"><rect x="1.35" y="5.6" width="14" height="12.8" rx="3.5" fill="none" stroke="#000" stroke-width="2.5"/><path d="M8.4 14 L19.2 4" stroke="#000" stroke-width="3.2"/><path d="M16.6 4.2 L19 2 L21 4 L18.6 6.4 Z" fill="#000"/></svg>
<div class="a nw" style="left:2419.5px;top:968px;width:5.5px;height:39px;line-height:39px;overflow:hidden;font-weight:bold;color:#111">用</div>
<div class="a" style="left:669px;top:1007px;width:1756px;height:1px;background:#d8d8d8"></div>
<div class="a" style="left:669px;top:1047px;width:1756px;height:42px;background:#f9f9f9"></div>
<div class="a" style="left:2392px;top:1008px;width:33px;height:81px;background:#efefef"></div>
<div class="a" style="left:669px;top:1010px;width:1723px;height:37px;border:2px solid #7b68ee;border-right:none"></div>
<div class="a" style="left:669px;top:1047px;width:1756px;height:1px;background:#d8d8d8"></div>
<div class="a" style="left:669px;top:1089px;width:1756px;height:1px;background:#d8d8d8"></div>
<div class="a" style="left:750px;top:1008px;width:1px;height:81px;background:#d8d8d8"></div>
<div class="a" style="left:833px;top:1008px;width:1px;height:81px;background:#d8d8d8"></div>
<div class="a" style="left:1040px;top:1008px;width:1px;height:81px;background:#d8d8d8"></div>
<div class="a" style="left:1177px;top:1008px;width:1px;height:81px;background:#d8d8d8"></div>
<div class="a" style="left:1314px;top:1008px;width:1px;height:81px;background:#d8d8d8"></div>
<div class="a" style="left:1405px;top:1008px;width:1px;height:81px;background:#d8d8d8"></div>
<div class="a" style="left:1542px;top:1008px;width:1px;height:81px;background:#d8d8d8"></div>
<div class="a" style="left:1679px;top:1008px;width:1px;height:81px;background:#d8d8d8"></div>
<div class="a" style="left:1815px;top:1008px;width:1px;height:81px;background:#d8d8d8"></div>
<div class="a" style="left:1952px;top:1008px;width:1px;height:81px;background:#d8d8d8"></div>
<div class="a" style="left:2117px;top:1008px;width:1px;height:81px;background:#d8d8d8"></div>
<div class="a" style="left:2254px;top:1008px;width:1px;height:81px;background:#d8d8d8"></div>
<div class="a" style="left:2391px;top:1008px;width:1px;height:81px;background:#d8d8d8"></div>
<div class="a nw" style="left:669px;top:1010px;width:81px;height:41px;line-height:41px;text-align:center;color:#333">1</div>
<div class="a" style="left:755px;top:1019px;width:21px;height:22px;background:#dcdcdc;border-radius:3px"></div>
<div class="a nw" style="left:837px;top:1010px;height:41px;line-height:41px;color:#333">蒙脱石散剂(华纳比...</div>
<div class="a nw" style="left:1044px;top:1010px;height:41px;line-height:41px;color:#333">3g*15袋</div>
<div class="a nw" style="left:1181px;top:1010px;height:41px;line-height:41px;color:#333">1</div>
<div class="a nw" style="left:1318px;top:1010px;height:41px;line-height:41px;color:#333">g</div>
<div class="a nw" style="left:1409px;top:1010px;height:41px;line-height:41px;color:#333">st</div>
<div class="a nw" style="left:1546px;top:1010px;height:41px;line-height:41px;color:#333">口服</div>
<div class="a nw" style="left:1683px;top:1010px;height:41px;line-height:41px;color:#333">1</div>
<div class="a nw" style="left:1819px;top:1010px;height:41px;line-height:41px;color:#333">1天</div>
<div class="a nw" style="left:1956px;top:1010px;height:41px;line-height:41px;color:#333">1</div>
<div class="a nw" style="left:2121px;top:1010px;height:41px;line-height:41px;color:#333">盒</div>
<div class="a nw" style="left:669px;top:1051px;width:81px;height:41px;line-height:41px;text-align:center;color:#333">2</div>
<div class="a" style="left:755px;top:1061px;width:21px;height:21px;background:#fff;border:1px solid #dcdcdc;border-radius:3px"></div>
<div class="a nw" style="left:837px;top:1051px;height:41px;line-height:41px;color:#333">布拉氏酵母菌散(亿...</div>
<div class="a nw" style="left:1044px;top:1051px;height:41px;line-height:41px;color:#333">0.25g*6袋</div>
<div class="a nw" style="left:1181px;top:1051px;height:41px;line-height:41px;color:#333">1</div>
<div class="a nw" style="left:1318px;top:1051px;height:41px;line-height:41px;color:#333">g</div>
<div class="a nw" style="left:1409px;top:1051px;height:41px;line-height:41px;color:#333">st</div>
<div class="a nw" style="left:1546px;top:1051px;height:41px;line-height:41px;color:#333">口服</div>
<div class="a nw" style="left:1683px;top:1051px;height:41px;line-height:41px;color:#333">1</div>
<div class="a nw" style="left:1819px;top:1051px;height:41px;line-height:41px;color:#333">1天</div>
<div class="a nw" style="left:1956px;top:1051px;height:41px;line-height:41px;color:#333">1</div>
<div class="a nw" style="left:2121px;top:1051px;height:41px;line-height:41px;color:#333">盒</div>
<div class="a" style="left:992px;top:539px;width:440px;height:288px;background:#fff;border:1px solid #a6c8f8;box-shadow:0 0 6px 3px rgba(140,185,250,.55);overflow:hidden">
<div class="a" style="left:0;top:26px;width:440px;height:7px;background:#f4f4f4"></div>
<div class="a" style="left:0;top:33px;width:440px;height:2px;background:#777"></div>
<div class="a" style="left:0;top:35px;width:440px;height:43px;background:#efefef;border-bottom:1px solid #d0d0d0"></div>
<div class="a" style="left:0;top:42px;width:42px;height:31px;background:#f8f8f8"></div>
<div class="a nw" style="left:16px;top:42px;height:31px;line-height:31px;color:#333">20</div>
<div class="a" style="left:44px;top:43px;width:18px;height:29px;background:#efefef;border:1px solid #ddd"></div>
<svg class="a" style="left:48px;top:47px" width="10" height="22" viewBox="0 0 10 22"><path d="M1.5 6 L5 2 L8.5 6 Z M1.5 16 L5 20 L8.5 16 Z" fill="#555"/></svg>
<div class="a nw" style="left:74px;top:42px;height:31px;line-height:31px;color:#333;font-size:18px">sec(s)</div>
<div class="a" style="left:0;top:79px;width:440px;height:25px;background:#fffde1"></div>
<div class="a" style="left:0;top:104px;width:440px;height:33px;background:#efefef;border-bottom:2px solid #6e6e6e"></div>
<div class="a nw" style="left:2px;top:106px;height:33px;line-height:33px;font-family:'Liberation Mono',monospace;font-size:19.5px;color:#111;transform:scaleY(0.92);-webkit-text-stroke:0.3px #111">XZ00</div>
<div class="a" style="left:59px;top:104px;width:3px;height:33px;background:linear-gradient(90deg,#fff 0,#fff 33%,#8a8a8a 33%,#8a8a8a 100%)"></div>
<div class="a nw" style="left:71px;top:106px;height:33px;line-height:33px;font-family:'Liberation Mono',monospace;font-size:19.5px;color:#111;transform:scaleY(0.92);-webkit-text-stroke:0.3px #111">BZID00</div>
<div class="a" style="left:146px;top:104px;width:3px;height:33px;background:linear-gradient(90deg,#fff 0,#fff 33%,#8a8a8a 33%,#8a8a8a 100%)"></div>
<div class="a nw" style="left:152px;top:106px;height:33px;line-height:33px;font-family:'Liberation Mono',monospace;font-size:19.5px;color:#111;transform:scaleY(0.92);-webkit-text-stroke:0.3px #111">BZMC00</div>
<div class="a" style="left:233px;top:104px;width:3px;height:33px;background:linear-gradient(90deg,#fff 0,#fff 33%,#8a8a8a 33%,#8a8a8a 100%)"></div>
<div class="a nw" style="left:238px;top:106px;height:33px;line-height:33px;font-family:'Liberation Mono',monospace;font-size:19.5px;color:#111;transform:scaleY(0.92);-webkit-text-stroke:0.3px #111">CFZT00</div>
<div class="a" style="left:320px;top:104px;width:3px;height:33px;background:linear-gradient(90deg,#fff 0,#fff 33%,#8a8a8a 33%,#8a8a8a 100%)"></div>
<div class="a nw" style="left:332px;top:106px;height:33px;line-height:33px;font-family:'Liberation Mono',monospace;font-size:19.5px;color:#111;transform:scaleY(0.92);-webkit-text-stroke:0.3px #111">FJFDJH</div>
<div class="a" style="left:407px;top:104px;width:3px;height:33px;background:linear-gradient(90deg,#fff 0,#fff 33%,#8a8a8a 33%,#8a8a8a 100%)"></div>
<div class="a nw" style="left:416px;top:106px;height:33px;line-height:33px;font-family:'Liberation Mono',monospace;font-size:19.5px;color:#111;transform:scaleY(0.92);-webkit-text-stroke:0.3px #111">CZ</div>
<div class="a" style="left:0;top:169px;width:440px;height:1px;border-top:1px dotted #d8d8d8"></div>
<div class="a" style="left:60px;top:137px;width:1px;height:32px;border-left:1px dotted #e0e0e0"></div>
<div class="a" style="left:147px;top:137px;width:1px;height:32px;border-left:1px dotted #e0e0e0"></div>
<div class="a" style="left:234px;top:137px;width:1px;height:32px;border-left:1px dotted #e0e0e0"></div>
<div class="a" style="left:321px;top:137px;width:1px;height:32px;border-left:1px dotted #e0e0e0"></div>
<div class="a" style="left:408px;top:137px;width:1px;height:32px;border-left:1px dotted #e0e0e0"></div>
<div class="a nw" style="left:237px;top:138px;height:32px;line-height:32px;font-family:'Liberation Mono',monospace;font-size:18px;color:#222;-webkit-text-stroke:0.3px #222">a</div>
</div>
<!-- vertical scrollbar -->
<div class="a" style="left:2442px;top:100px;width:45px;height:1176px;background:#f0f0f0"></div>
<div class="a" style="left:2465px;top:125px;width:21px;height:1151px;background:#c1c1c1"></div>
<svg class="a" style="left:2469px;top:109px" width="13" height="8" viewBox="0 0 13 8"><path d="M0.5 7.5 L6.5 0.8 L12.5 7.5 Z" fill="#a3a3a3"/></svg>
<!-- floating logo -->
<svg class="a" style="left:2421px;top:122px" width="72" height="72" viewBox="0 0 72 72">
<defs><linearGradient id="lg" x1="0.1" y1="0.05" x2="0.9" y2="0.95"><stop offset="0" stop-color="#78d0e0"/><stop offset="0.5" stop-color="#b6a9e8"/><stop offset="1" stop-color="#f5a0c2"/></linearGradient></defs>
<circle cx="35.7" cy="35.5" r="32.7" fill="rgba(255,255,255,0.3)" stroke="url(#lg)" stroke-width="5.6"/>
<g fill="#000" stroke="#000" stroke-width="0.9" stroke-linejoin="round"><path d="M18.9 21.3 L21.6 19.2 L25.5 19.5 L32.9 23.4 L33.7 25.1 L31.7 26.5 L27.5 26.5 L19.6 22.9 Z"/><path d="M32.9 28.2 L35.1 26.5 L48.7 19.5 L52 20 L53.2 22 L51.5 23.7 L40.2 30.5 L35.7 31 L33.1 29.6 Z"/><path d="M14.8 28.2 L16.5 27.9 L28.3 34.4 L31.2 37.2 L32 42 L30.6 42.3 L17.6 35 L15.1 32.7 L14.5 29.9 Z"/><path d="M46.1 35.6 L47 33.3 L56 28.2 L57.7 29.3 L58 31.6 L56.6 34.4 L47.5 40.6 Z"/><path d="M26.4 44 L28.3 43.2 L31.7 45.7 L32.9 49.7 L32.9 58.1 L30.6 57.8 L27.8 55.3 L26.7 50.8 Z"/><path d="M39.1 39.5 L41.9 37.2 L44.4 37 L45 39.5 L44.7 53.6 L42.5 57 L39.1 58.1 L38.8 45.1 Z"/></g></svg>
<!-- header icons -->
<svg class="a" style="left:2170px;top:0" width="310" height="50" viewBox="0 0 310 50"><path d="M22.30 29.80 H15.50 Q12.50 29.80 12.50 26.80 V17.30 Q12.50 14.30 15.50 14.30 H32.40 Q35.40 14.30 35.40 17.30 V24.50" fill="none" stroke="#fff" stroke-width="2.3"/><text x="15" y="23.9" font-family="Liberation Sans" font-weight="bold" font-size="10" fill="#fff" stroke="#fff" stroke-width="0.5">SI</text><ellipse cx="30" cy="29" rx="5" ry="3.8" fill="none" stroke="#fff" stroke-width="2.2"/><circle cx="30" cy="29" r="2.1" fill="#fff"/><rect x="78.90" y="19.60" width="2.4" height="4.4" fill="none" stroke="#fff" stroke-width="1.6"/><rect x="83.90" y="15.00" width="2.6" height="8.9" fill="none" stroke="#fff" stroke-width="1.6"/><rect x="89.10" y="17.00" width="2.2" height="6.9" fill="none" stroke="#fff" stroke-width="1.6"/><path d="M78.10 26.90 H87.10" stroke="#fff" stroke-width="2"/><path d="M86.50 33.00 L87.40 28.90 L94.70 21.70 L97.90 24.90 L90.60 32.20 Z" fill="none" stroke="#fff" stroke-width="1.6" stroke-linejoin="round"/><path d="M150.50 27.50 V13.80 M165.50 13.80 V31.00 Q165.50 33.60 162.80 33.60 H147.30 Q144.80 33.60 144.80 31.00 V27.70 H157.60 Q157.80 33.20 162.80 33.60" fill="none" stroke="#fff" stroke-width="2.1" stroke-linejoin="round"/><path d="M150.00 14.20 L151.60 13.20 L153.20 15.00 L154.80 13.20 L156.40 15.00 L158.00 13.20 L159.60 15.00 L161.20 13.20 L162.80 15.00 L164.40 13.20 L166.00 15.00 L166.00 13.20" fill="none" stroke="#fff" stroke-width="1.1"/><path d="M153.10 18.80 H164.00 M155.10 22.10 H163.00" stroke="#fff" stroke-width="1.8"/><ellipse cx="221.5" cy="24" rx="12.3" ry="9.4" fill="none" stroke="#fff" stroke-width="2.4"/><text x="214.30000000000018" y="28.8" font-family="Liberation Sans" font-weight="bold" font-style="italic" font-size="13.5" fill="#fff" stroke="#fff" stroke-width="0.7">SI</text><path d="M288.02 17.71 L287.67 15.08 L283.13 15.08 L282.78 17.71 L281.09 18.68 L278.64 17.67 L276.36 21.61 L278.47 23.23 L278.47 25.17 L276.36 26.79 L278.64 30.73 L281.09 29.72 L282.78 30.69 L283.13 33.32 L287.67 33.32 L288.02 30.69 L289.71 29.72 L292.16 30.73 L294.44 26.79 L292.33 25.17 L292.33 23.23 L294.44 21.61 L292.16 17.67 L289.71 18.68 Z" fill="none" stroke="#fff" stroke-width="2" stroke-linejoin="round"/><circle cx="285.40" cy="24.20" r="2.9" fill="none" stroke="#fff" stroke-width="1.9"/></svg>
</body></html>
